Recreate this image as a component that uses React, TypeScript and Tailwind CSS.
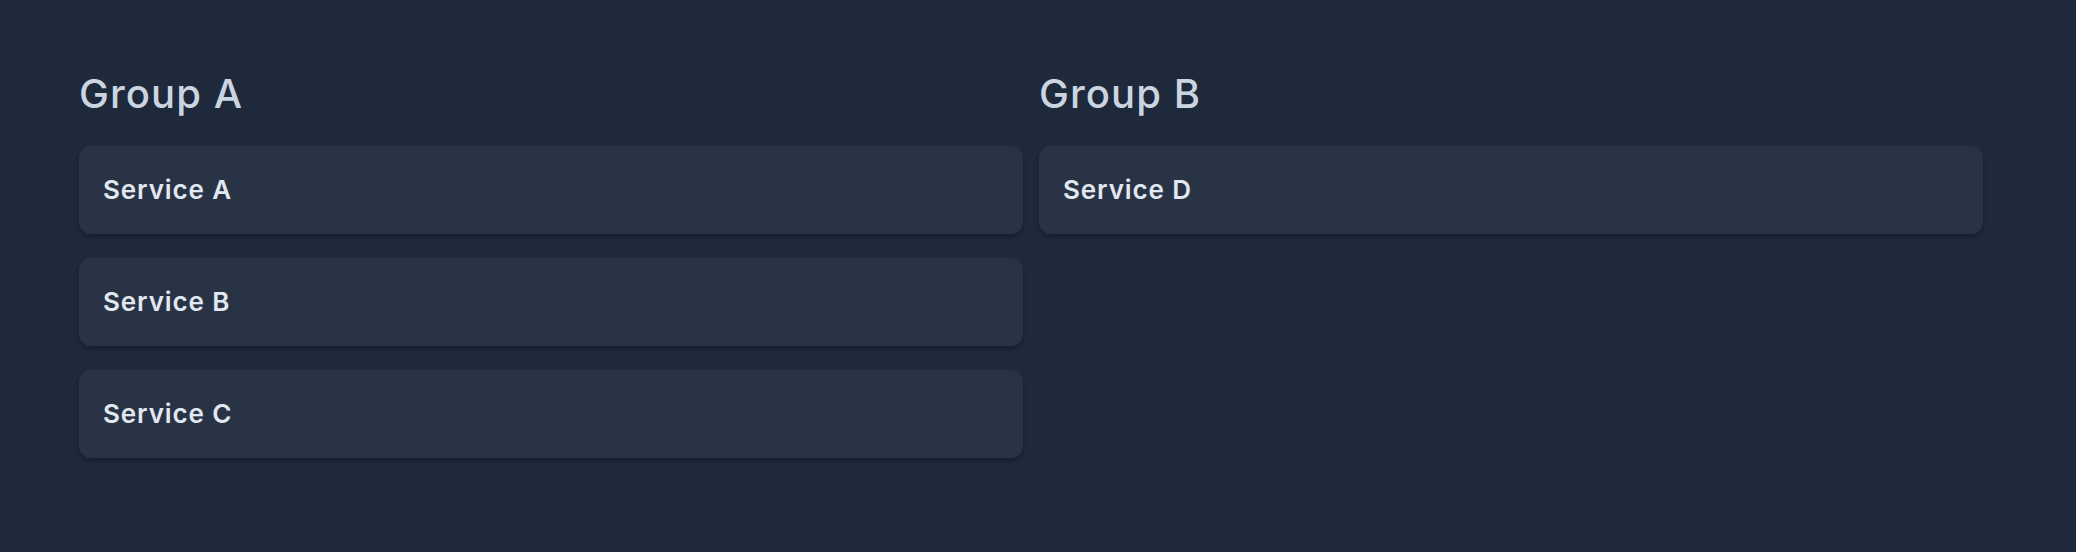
import React from 'react';

interface Group {
  name: string;
  services: string[];
}

const groups: Group[] = [
  { name: 'Group A', services: ['Service A', 'Service B', 'Service C'] },
  { name: 'Group B', services: ['Service D'] },
];

const App: React.FC = () => {
  return (
    <div
      className="min-h-screen w-full bg-[#1e293b] pl-[79px] pt-[74px]"
      style={{ fontFamily: 'Inter, "Noto Sans", sans-serif' }}
    >
      <div className="flex gap-4">
        {groups.map((group) => (
          <div key={group.name} className="w-[944px] flex flex-col">
            <h2 className="text-[40px] leading-none font-medium text-[#cbd5e1] tracking-[1.1px] mb-[32px]">
              {group.name}
            </h2>
            <ul className="flex flex-col gap-[24px]">
              {group.services.map((service) => (
                <li
                  key={service}
                  className="h-[88px] flex items-center px-6 pb-[2px] rounded-xl bg-[#283446] shadow-md shadow-black/20"
                >
                  <span className="text-[26px] font-semibold text-[#e2e8f0] tracking-[0.9px]">{service}</span>
                </li>
              ))}
            </ul>
          </div>
        ))}
      </div>
    </div>
  );
};

export default App;
